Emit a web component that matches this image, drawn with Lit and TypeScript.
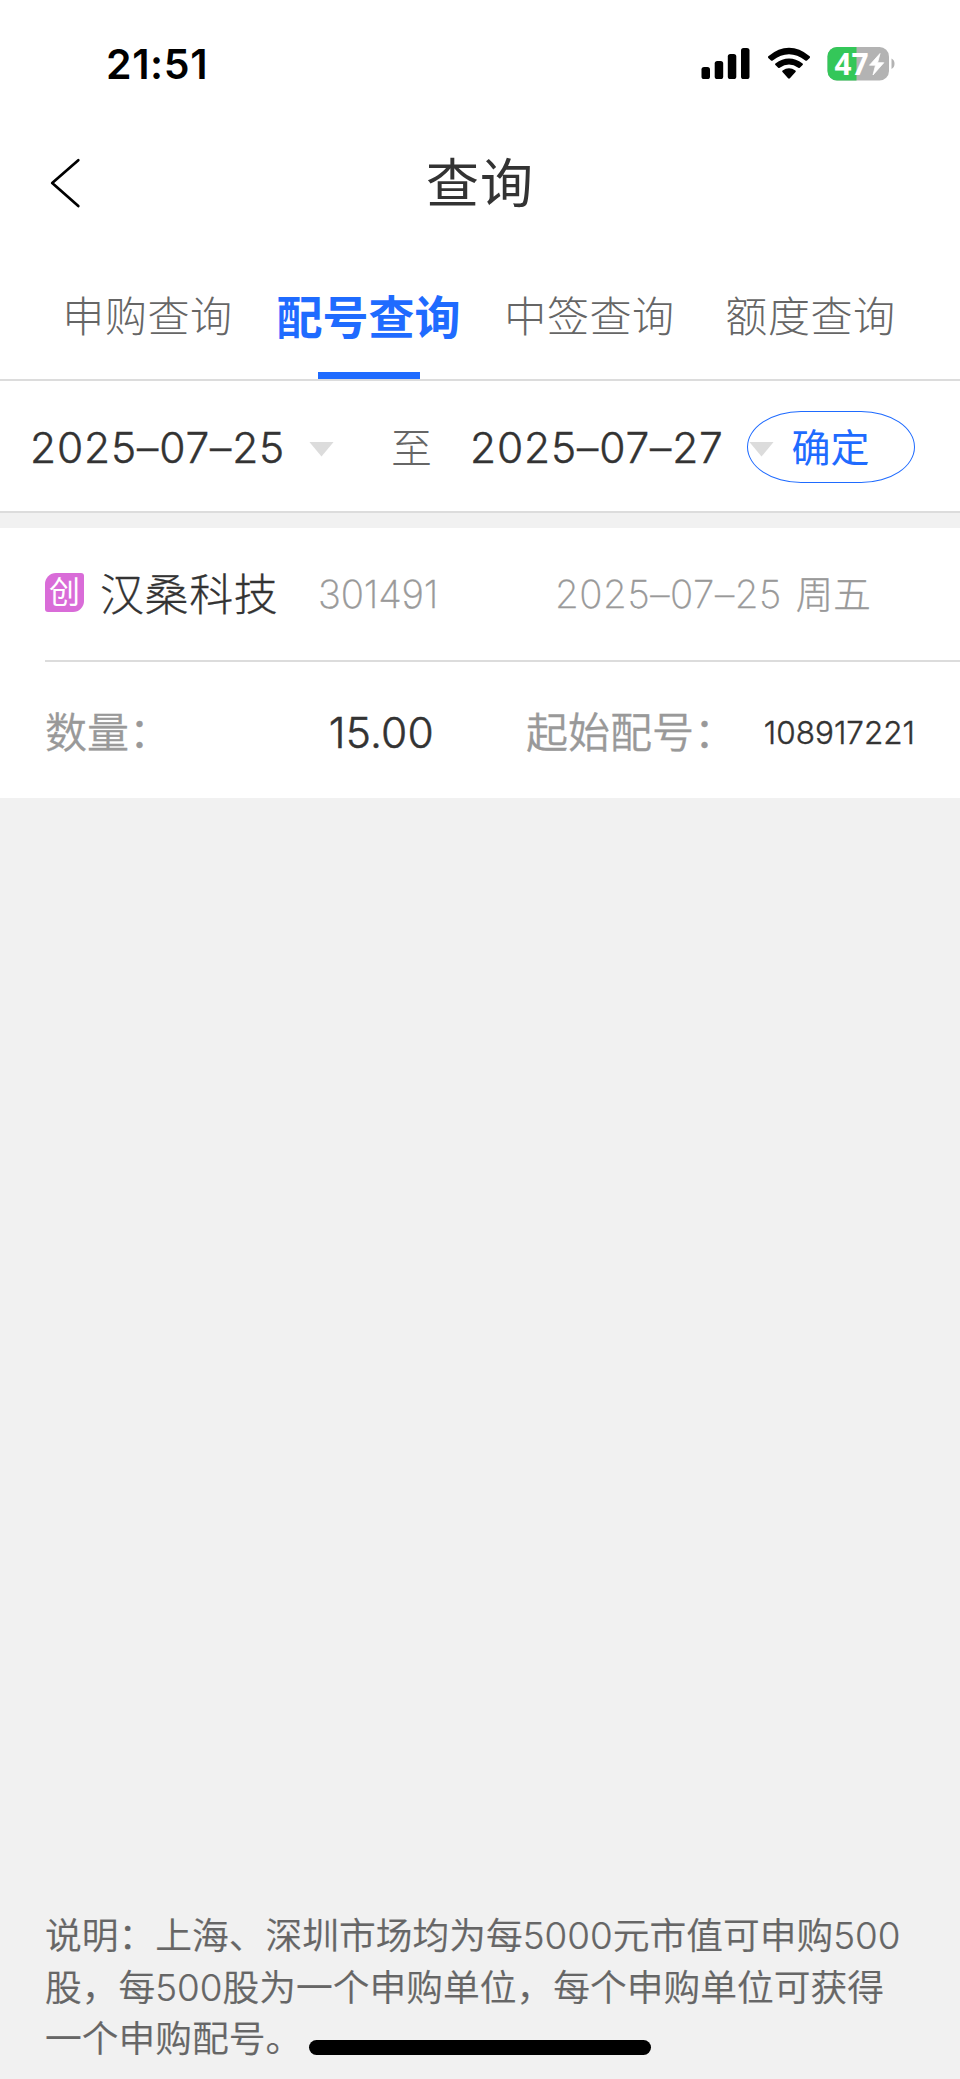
import { LitElement, html, css } from "lit";
import { customElement, state } from "lit/decorators.js";

@customElement("status-bar")
class StatusBar extends LitElement {
  static styles = css`
    :host { display: flex; align-items: center; height: 128px; padding: 0 64px 0 106px; box-sizing: border-box; font-family: Inter, sans-serif; }
    .time { font-size: 41px; font-weight: 600; line-height: 50px; color: #000; letter-spacing: 0.6px; flex: 1; }
    svg { display: block; flex: none; overflow: visible; }
    .signal { margin-right: 16px; }
    .wifi { margin-right: 16px; }
    .level { font: 700 29.500px "Noto Sans", sans-serif; fill: #fff; }
  `;
  render() {
    return html`
      <div class="time">21:51</div>
      <svg class="signal" width="50" height="34" viewBox="0 0 50 34">
        <rect x="0.5" y="20" width="8.5" height="12" rx="2.6" />
        <rect x="13.7" y="14" width="8.5" height="18" rx="2.6" />
        <rect x="26.8" y="7" width="8.5" height="25" rx="2.6" />
        <rect x="40" y="1" width="8.5" height="31" rx="2.6" />
      </svg>
      <svg class="wifi" width="44" height="34" viewBox="0 0 44 34">
        <path d="M1.300 11 Q0.500 10 1.300 9.200 Q22 -7.500 42.700 9.200 Q43.500 10 42.700 11 L40 13.500 Q39.200 14.200 38.300 13.500 Q22 0.800 5.700 13.500 Q4.800 14.200 4 13.500Z" />
        <path d="M8.400 18 Q7.600 17.200 8.400 16.400 Q22 6.600 35.600 16.400 Q36.400 17.200 35.600 18 L32.800 20.800 Q32.100 21.400 31.300 20.800 Q22 14 12.700 20.800 Q11.900 21.400 11.200 20.800Z" />
        <path d="M15.500 25 Q14.700 24.200 15.600 23.500 Q22 19 28.400 23.500 Q29.300 24.200 28.500 25 L22.900 31.300 Q22 32.200 21.100 31.300Z" />
      </svg>
      <svg width="69" height="48" viewBox="0 -6 69 48">
        <defs><clipPath id="body"><rect x="0.500" y="1" width="61.500" height="33.500" rx="9.500" /></clipPath></defs>
        <g clip-path="url(#body)">
          <rect width="62" height="36" fill="#b3b3b3" />
          <rect width="29.500" height="36" fill="#34c759" />
        </g>
        <path d="M64.500 12.500 Q67.500 14 67.500 17.700 Q67.500 21.400 64.500 23Z" fill="#b3b3b3" />
        <text class="level" x="7.500" y="28.500" textLength="34" lengthAdjust="spacingAndGlyphs">47</text>
        <path d="M53 7.500 L42.500 19.200 H48.500 L46 29 L56.800 16.700 H50.600Z" fill="#fff" stroke="#fff" stroke-width="0.800" stroke-linejoin="round" />
      </svg>
    `;
  }
}

@customElement("app-root")
class AppRoot extends LitElement {
  static styles = css`
    :host {
      display: flex; flex-direction: column; position: relative; box-sizing: border-box;
      width: 960px; height: 2079px; overflow: hidden; background: #f1f1f1; color: #333;
      font-family: Inter, "Noto Sans CJK SC", sans-serif;
    }
    * { box-sizing: border-box; white-space: nowrap; }
    .head { background: #fff; }
    .nav { display: grid; grid-template-columns: 96px 1fr 96px; align-items: center; height: 110px; }
    .back { display: block; margin-left: 50px; }
    .title { text-align: center; font-size: 53px; line-height: 60px; font-weight: 400; letter-spacing: 1px; padding-top: 1px; }
    .tabs { display: grid; grid-template-columns: repeat(4, 221px); justify-content: center; height: 143px; padding-right: 2px; border-bottom: 2px solid #dcdcdc; }
    .tab { display: flex; flex-direction: column; align-items: center; justify-content: space-between; padding-top: 49px; font-size: 42px; line-height: 60px; font-weight: 300; color: #666; letter-spacing: 0.6px; }
    .tab.on { font-size: 46px; font-weight: 600; color: #1f6bff; letter-spacing: 0; }
    .bar { width: 102px; height: 7px; background: #1f6bff; }
    .filter { display: flex; align-items: center; height: 132px; background: #fff; border-bottom: 2px solid #dcdcdc; padding-left: 30px; }
    .date { font-size: 42.500px; line-height: 60px; font-weight: 350; letter-spacing: 0.850px; width: 255px; padding-top: 3px; -webkit-text-stroke: 0.450px #333; }
    .arrow { width: 25px; height: 15px; background: #dcdcdc; clip-path: polygon(0 0, 100% 0, 50% 100%); margin-left: 24px; margin-top: 6px; }
    .to { font-size: 41px; line-height: 60px; font-weight: 300; color: #666; margin: 0 38px 0 57px; padding-top: 3px; }
    .ok { width: 168px; height: 72px; margin: 2px 0 0 -27px; border: 1.400px solid #1f6bff; border-radius: 54px / 36px; font-size: 39px; line-height: 72px; color: #1f6bff; text-align: center; padding-right: 1px; font-weight: 400; }
    .card { margin-top: 15px; height: 270px; background: #fff; padding-left: 45px; }
    .stock { display: flex; align-items: center; height: 134px; border-bottom: 2px solid #dcdcdc; }
    .badge { width: 39px; height: 39px; border-radius: 11px 3px 11px 3px; background: #d96cd8; color: #fff; font-size: 31px; line-height: 38px; text-align: center; margin-right: 16px; margin-top: -4px; }
    .name { font-size: 44px; line-height: 60px; font-weight: 300; letter-spacing: 0.600px; width: 218px; padding-top: 2px; -webkit-text-stroke: 0.300px #333; }
    .code { font-size: 38.500px; line-height: 60px; font-weight: 250; color: #999; width: 237px; letter-spacing: -0.200px; -webkit-text-stroke: 0.400px #999; }
    .day { font-size: 38.500px; line-height: 60px; font-weight: 250; color: #999; display: flex; gap: 14px; -webkit-text-stroke: 0.300px #999; }
    .day span:first-child { letter-spacing: 0.550px; }
    .week { font-weight: 300; font-size: 37.500px; padding-top: 1px; }
    .nums { display: flex; align-items: center; height: 136px; padding-top: 5px; line-height: 60px; }
    .label { font-size: 42px; color: #999; font-weight: 350; -webkit-text-stroke: 0.300px #999; }
    .qty { font-size: 42.500px; width: 263px; text-align: right; font-weight: 300; letter-spacing: 0.200px; -webkit-text-stroke: 0.500px #333; }
    .first { margin-left: 92px; }
    .start { flex: 1; text-align: right; padding-right: 45px; font-size: 31.500px; font-weight: 300; -webkit-text-stroke: 0.400px #333; }
    .note { margin-top: auto; padding: 0 0 14px 45px; font-size: 36.750px; line-height: 51.700px; color: #666; font-weight: 350; -webkit-text-stroke: 0.200px #666; }
    .home { position: absolute; left: 309px; top: 2040px; width: 342px; height: 15px; border-radius: 8px; background: #000; }
  `;

  @state() private tab = 1;
  private tabs = ["申购查询", "配号查询", "中签查询", "额度查询"];
  private note = [
    "说明：上海、深圳市场均为每5000元市值可申购500",
    "股，每500股为一个申购单位，每个申购单位可获得",
    "一个申购配号。",
  ];

  render() {
    return html`
      <div class="head">
        <status-bar></status-bar>
        <div class="nav">
          <svg class="back" width="32" height="50" viewBox="0 0 32 50" fill="none" stroke="#000" stroke-width="2.700" stroke-linecap="round" stroke-linejoin="round">
            <path d="M28.300 2.200 L2.200 25 L28.300 48" />
          </svg>
          <div class="title">查询</div>
        </div>
        <div class="tabs">
          ${this.tabs.map((t, i) => html`
            <div class="tab ${i === this.tab ? "on" : ""}" @click=${() => (this.tab = i)}>
              <span>${t}</span>
              ${i === this.tab ? html`<div class="bar"></div>` : ""}
            </div>`)}
        </div>
      </div>
      <div class="filter">
        <div class="date">2025–07–25</div>
        <div class="arrow"></div>
        <div class="to">至</div>
        <div class="date">2025–07–27</div>
        <div class="arrow"></div>
        <div class="ok">确定</div>
      </div>
      <div class="card">
        <div class="stock">
          <div class="badge">创</div>
          <div class="name">汉桑科技</div>
          <div class="code">301491</div>
          <div class="day"><span>2025–07–25</span><span class="week">周五</span></div>
        </div>
        <div class="nums">
          <div class="label">数量：</div>
          <div class="qty">15.00</div>
          <div class="label first">起始配号：</div>
          <div class="start">108917221</div>
        </div>
      </div>
      <div class="note">${this.note.map((l) => html`<div>${l}</div>`)}</div>
      <div class="home"></div>
    `;
  }
}
